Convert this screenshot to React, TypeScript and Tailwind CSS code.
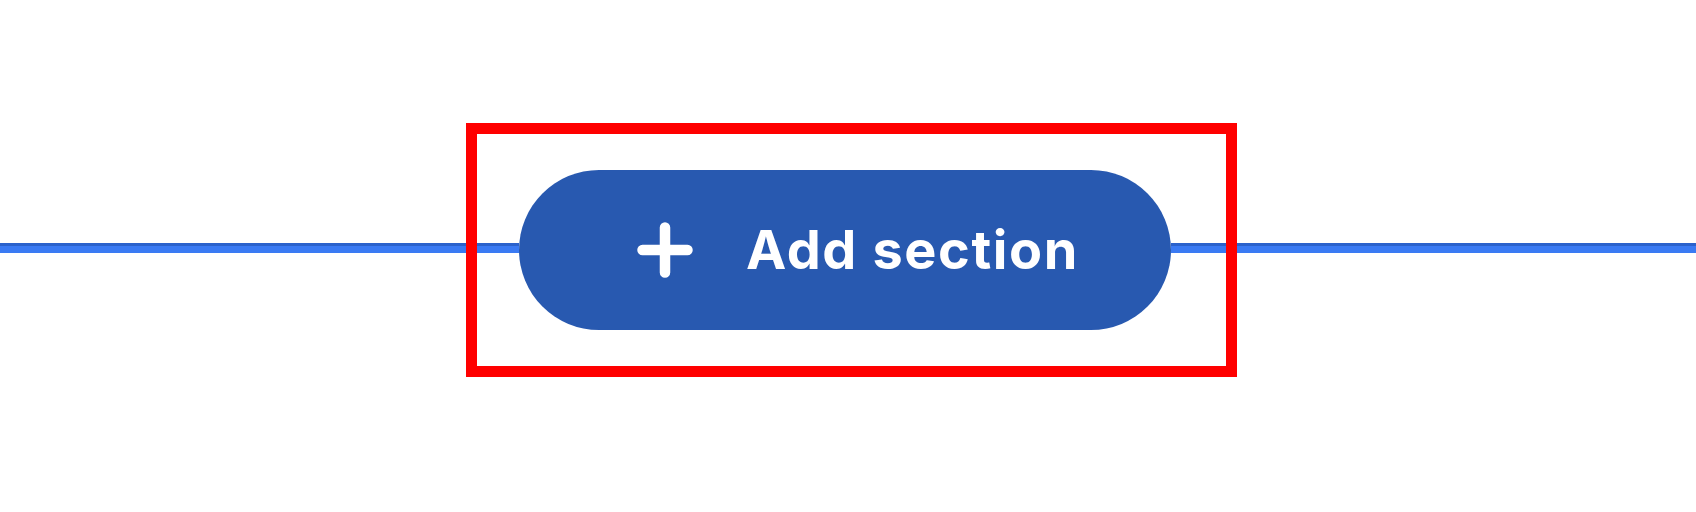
function Rule({ className = '' }: { className?: string }) {
  return <div className={`h-[10px] mb-[4px] border-t-[3px] border-[#2b62cc] bg-[#3a7af3] ${className}`} />;
}

function PlusIcon() {
  return (
    <svg width="56" height="56" viewBox="0 0 56 56" fill="none" className="shrink-0">
      <path d="M28 5.5v45M5.5 28h45" stroke="white" strokeWidth="10.5" strokeLinecap="round" />
    </svg>
  );
}

export default function App() {
  return (
    <div className="h-[512px] w-full bg-white pt-[123px]" style={{ fontFamily: 'Inter, "Noto Sans", sans-serif' }}>
      <div className="flex items-center">
        <Rule className="w-[466px] shrink-0" />

        {/* highlighted add-section control */}
        <div className="flex h-[254px] w-[771px] shrink-0 items-center border-[11px] border-[#ff0000]">
          <Rule className="w-[42px] shrink-0" />
          <button className="flex h-[160px] w-[652px] shrink-0 items-center rounded-full bg-[#2859b0] pl-[118px] text-white">
            <PlusIcon />
            <span className="ml-[53px] text-[54px] font-bold leading-none tracking-[0.03em]">Add section</span>
          </button>
          <Rule className="flex-1" />
        </div>

        <Rule className="flex-1" />
      </div>
    </div>
  );
}
